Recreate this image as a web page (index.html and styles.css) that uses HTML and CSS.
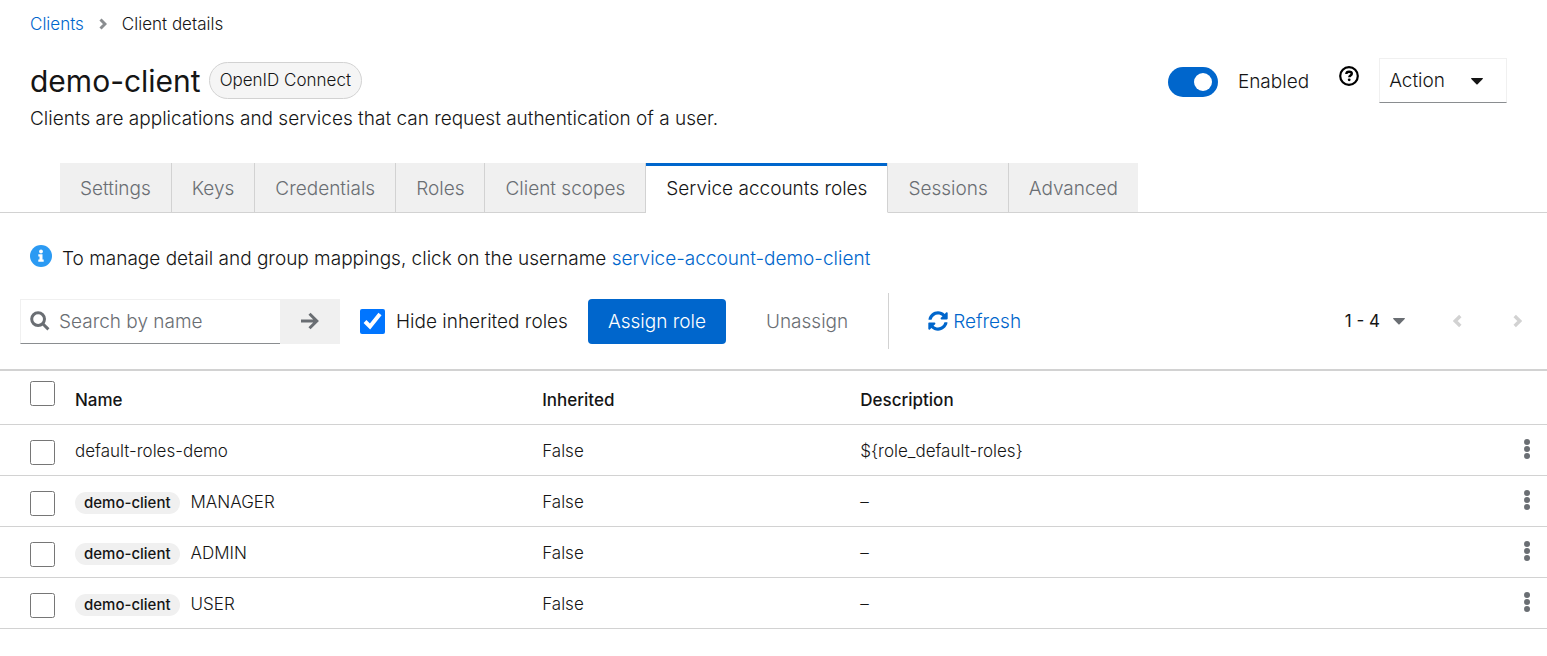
FILE: index.html
```html
<!DOCTYPE html>
<html lang="en">
<head>
<meta charset="utf-8">
<title>Client details</title>
<link rel="stylesheet" href="styles.css">
</head>
<body>
<header class="page-header">
  <nav class="breadcrumb" aria-label="Breadcrumb">
    <a href="#">Clients</a>
    <svg class="crumb-sep" viewBox="0 0 8 12" aria-hidden="true"><path d="M1.5 1.5 6 6l-4.500 4.500"/></svg>
    <span>Client details</span>
  </nav>
  <div class="title-row">
    <div class="title-group">
      <h1>demo-client</h1>
      <span class="protocol">OpenID Connect</span>
    </div>
    <div class="header-actions">
      <label class="switch"><input type="checkbox" role="switch" checked><span>Enabled</span></label>
      <button class="icon-button help" aria-label="Help">
        <svg viewBox="0 0 20 20" aria-hidden="true"><circle cx="10" cy="10" r="8.800" fill="none" stroke="currentColor" stroke-width="2.200"/><path d="M7.300 8c.1-1.500 1.200-2.300 2.800-2.300 1.500 0 2.700.8 2.700 2.100 0 1.700-2.500 1.800-2.500 3.400" fill="none" stroke="currentColor" stroke-width="2.400"/><circle cx="10.200" cy="13.800" r="1.400"/></svg>
      </button>
      <button class="action-button"><span>Action</span><svg class="caret" viewBox="0 0 12 7" aria-hidden="true"><path d="M.6 0h10.800q.9.300.3 1L6.600 6.300q-.6.600-1.200 0L.3 1Q-.3.300.6 0z"/></svg></button>
    </div>
  </div>
  <p class="subtitle">Clients are applications and services that can request authentication of a user.</p>
</header>

<nav class="tabs" role="tablist" aria-label="Client sections">
  <button role="tab" class="tab">Settings</button>
  <button role="tab" class="tab">Keys</button>
  <button role="tab" class="tab">Credentials</button>
  <button role="tab" class="tab">Roles</button>
  <button role="tab" class="tab">Client scopes</button>
  <button role="tab" class="tab current" aria-selected="true">Service accounts roles</button>
  <button role="tab" class="tab">Sessions</button>
  <button role="tab" class="tab">Advanced</button>
</nav>

<main>
  <p class="hint">
    <svg class="info-icon" viewBox="0 0 22 22" aria-hidden="true"><circle cx="11" cy="11" r="11" fill="#2b9af3"/><circle cx="11" cy="6.500" r="1.900" fill="#fff"/><path d="M8.300 9.300h4.200v5.200h1.200v2.200H8.300v-2.200h1.200v-3H8.300z" fill="#fff"/></svg>
    <span>To manage detail and group mappings, click on the username <a href="#">service-account-demo-client</a></span>
  </p>

  <div class="toolbar">
    <form class="search" role="search">
      <div class="search-box">
        <svg class="search-icon" viewBox="0 0 20 20" aria-hidden="true"><circle cx="8.100" cy="8.100" r="6.400"/><path d="m12.800 12.800 5.600 5.600"/></svg>
        <input type="text" placeholder="Search by name" aria-label="Search by name">
      </div>
      <button type="button" class="search-go" aria-label="Search">
        <svg viewBox="0 0 18 18" aria-hidden="true"><path d="M0 9h15.500M8.500 1.700 15.800 9l-7.300 7.300"/></svg>
      </button>
    </form>
    <label class="hide-inherited"><input type="checkbox" class="check" checked><span>Hide inherited roles</span></label>
    <button class="primary">Assign role</button>
    <button class="plain" disabled>Unassign</button>
    <button class="refresh">
      <svg viewBox="0 0 512 512" aria-hidden="true"><path d="M370.700 133.300C339.500 104 298.900 88 255.800 88c-77.500.1-144.300 53.200-162.800 126.900-1.300 5.400-6.100 9.200-11.700 9.200H24.100c-7.500 0-13.200-6.800-11.800-14.200C33.900 94.900 134.800 8 256 8c66.400 0 126.800 26.100 171.300 68.700L463 41c15.100-15.100 41-4.400 41 17v134c0 13.300-10.700 24-24 24H345.900c-21.400 0-32.100-25.900-17-41l41.800-41.700zM32 296h134.100c21.400 0 32.100 25.900 17 41l-41.800 41.800c31.300 29.300 71.800 45.300 114.900 45.300 77.400-.1 144.300-53.100 162.800-126.800 1.300-5.400 6.100-9.200 11.700-9.200h57.300c7.500 0 13.200 6.800 11.800 14.200C478.100 417.100 377.200 504 256 504c-66.400 0-126.800-26.100-171.300-68.700L49 471c-15.100 15.100-41 4.400-41-17V320c0-13.300 10.700-24 24-24z"/></svg>
      <span>Refresh</span>
    </button>
    <div class="pagination">
      <button class="range"><span>1 - 4</span><svg class="caret" viewBox="0 0 12 7" aria-hidden="true"><path d="M.6 0h10.800q.9.300.3 1L6.600 6.300q-.6.600-1.200 0L.3 1Q-.3.300.6 0z"/></svg></button>
      <button class="page-step" aria-label="Previous page" disabled><svg viewBox="0 0 8 12" aria-hidden="true"><path d="M6.500 1.500 2 6l4.500 4.500"/></svg></button>
      <button class="page-step" aria-label="Next page" disabled><svg viewBox="0 0 8 12" aria-hidden="true"><path d="M1.500 1.500 6 6l-4.500 4.500"/></svg></button>
    </div>
  </div>

  <table class="roles">
    <colgroup><col class="col-check"><col class="col-name"><col class="col-inherited"><col><col class="col-menu"></colgroup>
    <thead>
      <tr><td><input type="checkbox" class="check" aria-label="Select all"></td><th scope="col">Name</th><th scope="col">Inherited</th><th scope="col">Description</th><td></td></tr>
    </thead>
    <tbody>
      <tr><td><input type="checkbox" class="check" aria-label="Select default-roles-demo"></td><td>default-roles-demo</td><td>False</td><td>${role_default-roles}</td><td><button class="kebab" aria-label="Actions"><svg viewBox="0 0 6 20" aria-hidden="true"><circle cx="3" cy="3" r="3"/><circle cx="3" cy="10" r="3"/><circle cx="3" cy="17" r="3"/></svg></button></td></tr>
      <tr><td><input type="checkbox" class="check" aria-label="Select MANAGER"></td><td><span class="badge">demo-client</span>MANAGER</td><td>False</td><td>–</td><td><button class="kebab" aria-label="Actions"><svg viewBox="0 0 6 20" aria-hidden="true"><circle cx="3" cy="3" r="3"/><circle cx="3" cy="10" r="3"/><circle cx="3" cy="17" r="3"/></svg></button></td></tr>
      <tr><td><input type="checkbox" class="check" aria-label="Select ADMIN"></td><td><span class="badge">demo-client</span>ADMIN</td><td>False</td><td>–</td><td><button class="kebab" aria-label="Actions"><svg viewBox="0 0 6 20" aria-hidden="true"><circle cx="3" cy="3" r="3"/><circle cx="3" cy="10" r="3"/><circle cx="3" cy="17" r="3"/></svg></button></td></tr>
      <tr><td><input type="checkbox" class="check" aria-label="Select USER"></td><td><span class="badge">demo-client</span>USER</td><td>False</td><td>–</td><td><button class="kebab" aria-label="Actions"><svg viewBox="0 0 6 20" aria-hidden="true"><circle cx="3" cy="3" r="3"/><circle cx="3" cy="10" r="3"/><circle cx="3" cy="17" r="3"/></svg></button></td></tr>
    </tbody>
  </table>
</main>
</body>
</html>
```
FILE: styles.css
```css
* { box-sizing: border-box; }

body {
  margin: 0;
  background: #fff;
  color: #151515;
  font-family: Inter, "Open Sans", sans-serif;
  font-size: 19px;
  font-weight: 300;
  line-height: 30px;
}

button, input { font: inherit; color: inherit; }
button { margin: 0; padding: 0; border: 0; background: none; }
a { color: #06c; text-decoration: none; }
svg { display: block; flex: none; fill: currentColor; }
h1, p { margin: 0; font-weight: inherit; }

.page-header { padding: 12px 40px 0 30px; }

.breadcrumb { display: flex; align-items: center; gap: 15px; font-size: 17px; line-height: 24px; }
.crumb-sep { width: 8px; height: 12px; fill: none; stroke: #8a8d90; stroke-width: 3; }

.title-row { display: flex; justify-content: space-between; align-items: center; margin-top: 22px; height: 45px; }
.title-group { display: flex; align-items: center; gap: 8px; }
h1 { font-size: 30px; font-weight: 400; line-height: 36px; }
.protocol { padding: 0 10px; border: 1px solid #d2d2d2; border-radius: 30px; background: #f5f5f5; font-size: 17px; line-height: 35px; }
.subtitle { line-height: 32px; }

.header-actions { display: flex; align-items: center; }
.switch { display: flex; align-items: center; gap: 20px; padding-top: 2px; }
.switch input { appearance: none; display: flex; align-items: center; justify-content: flex-end; width: 50px; height: 30px; margin: 0; padding-right: 6px; border-radius: 15px; background: #06c; }
.switch input::before { content: ""; width: 18px; height: 18px; border-radius: 50%; background: #fff; }
.help { margin: 0 20px 10px 30px; color: #000; }
.help svg { width: 20px; height: 20px; }
.action-button { display: flex; align-items: center; gap: 26px; height: 45px; padding: 1px 23px 0 9px; border: 1px solid #f0f0f0; border-bottom-color: #8a8d90; }
.caret { width: 12px; height: 7px; }

.tabs { display: flex; margin-top: 28px; padding-left: 60px; box-shadow: inset 0 -1px #d2d2d2; }
.tab { height: 50px; padding: 2px 20px 0; border: solid #d2d2d2; border-width: 0 1px 1px 0; background: #f0f0f0; color: #6a6e73; }
.tab:last-child { border-right: 0; }
.tab.current { border-bottom-color: #fff; background: #fff; color: #151515; box-shadow: inset 0 3px #06c; }

.hint { display: flex; gap: 10px; padding: 31px 30px 19px; }
.info-icon { width: 22px; height: 22px; margin-top: 1px; }

.toolbar { display: flex; align-items: center; height: 56px; margin-bottom: 20px; padding: 0 10px 0 20px; }
.search { display: flex; height: 45px; }
.search-box { display: flex; align-items: center; gap: 9px; width: 260px; padding: 0 9px; border: 1px solid #f0f0f0; border-right: 0; border-bottom-color: #8a8d90; }
.search-box input { width: 100%; min-width: 0; padding: 2px 0 0; border: 0; outline: 0; background: none; }
.search-box input::placeholder { color: #6a6e73; opacity: 1; }
.search-icon { width: 20px; height: 20px; fill: none; stroke: #6a6e73; stroke-width: 3; }
.search-go { display: grid; place-items: center; width: 60px; background: #f0f0f0; }
.search-go svg { width: 18px; height: 18px; fill: none; stroke: #6a6e73; stroke-width: 3; }
.check { display: block; flex: none; width: 25px; height: 25px; margin: 0; }
.hide-inherited { display: flex; align-items: center; gap: 11px; margin: 0 20px; padding-top: 1px; }
.primary { height: 45px; padding: 2px 20px 0; border-radius: 4px; background: #06c; color: #fff; }
.plain { padding: 2px 40px 0; color: #6a6e73; }
.refresh { display: flex; align-items: center; gap: 5px; align-self: stretch; padding: 0 39px; border-left: 1px solid #d2d2d2; color: #06c; }
.refresh span { padding-top: 2px; }
.refresh svg { width: 20px; height: 20px; }
.pagination { display: flex; align-items: center; margin-left: auto; }
.range { display: flex; align-items: center; gap: 13px; margin-right: 22px; font-size: 17px; font-weight: 400; }
.range .caret { color: #6a6e73; }
.page-step { display: grid; place-items: center; width: 60px; height: 40px; color: #d2d2d2; }
.page-step:last-child { margin-right: -10px; }
.page-step svg { width: 9px; height: 14px; fill: none; stroke: currentColor; stroke-width: 3; }

.roles { width: 100%; table-layout: fixed; border-collapse: separate; border-spacing: 0; border-top: 2px solid #d2d2d2; font-size: 17px; line-height: 24px; }
.col-check { width: 75px; }
.col-name { width: 30.2%; }
.col-inherited { width: 20.56%; }
.col-menu { width: 60px; }
.roles td, .roles th { height: 51px; padding: 2px 0 0; border-bottom: 1px solid #d2d2d2; text-align: left; vertical-align: middle; }
.roles thead td, .roles thead th { height: 54px; }
.roles th { padding-top: 5px; font-weight: 500; }
.roles td:first-child { padding: 5px 0 0 30px; }
.roles thead td:first-child { padding: 0 0 8px 30px; }
.roles td:last-child { padding: 0 0 2px 37px; }
.badge { display: inline-block; margin-right: 11px; padding: 0 9px; border-radius: 30px; background: #f0f0f0; font-size: 15px; font-weight: 500; line-height: 22px; }
.kebab { display: block; }
.kebab svg { width: 6px; height: 20px; fill: #6a6e73; }
```
